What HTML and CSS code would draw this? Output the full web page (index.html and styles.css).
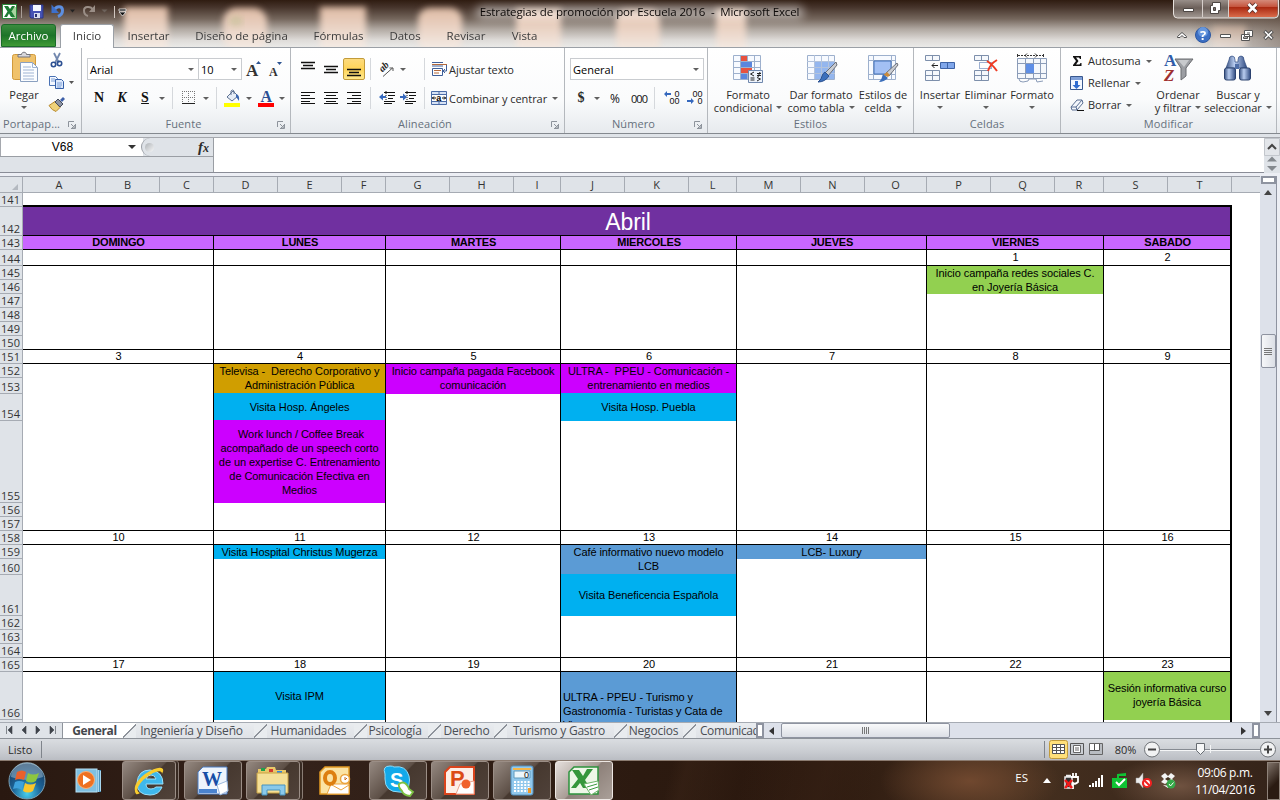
FILE: index.html
```html
<!DOCTYPE html>
<html lang="es">
<head>
<meta charset="utf-8">
<title>Estrategias de promoción por Escuela 2016 - Microsoft Excel</title>
<link rel="stylesheet" href="styles.css">
</head>
<body>
<div class="screen">
<header class="titlebar">
  <svg class="glass" width="1280" height="47" viewBox="0 0 1280 47">
    <defs><filter id="soft" x="-10%" y="-50%" width="120%" height="200%"><feGaussianBlur stdDeviation="3"/></filter><filter id="glow" x="-10%" y="-100%" width="120%" height="300%"><feGaussianBlur stdDeviation="5"/></filter>
    <linearGradient id="pe" x1="0" y1="0" x2="0" y2="1"><stop offset="0" stop-color="#dfbba4"/><stop offset="1" stop-color="#f6efea"/></linearGradient></defs>
    <g filter="url(#soft)" fill="url(#pe)"><rect x="124" y="7" width="44" height="44"/><rect x="223" y="8" width="44" height="44" rx="14"/><rect x="320" y="7" width="46" height="44"/><rect x="418" y="8" width="44" height="44" rx="12"/><rect x="516" y="9" width="45" height="44"/><rect x="616" y="10" width="44" height="44" rx="10"/><rect x="716" y="9" width="30" height="44"/><rect x="1212" y="26" width="34" height="26" opacity=".6"/></g>
    <ellipse cx="236" cy="21" rx="7" ry="5" fill="#b9bd8d" opacity=".5" filter="url(#soft)"/>
    <rect x="476" y="6" width="328" height="13" rx="6" fill="#fff" opacity=".5" filter="url(#glow)"/>
  </svg>
  <div class="title-row">
    <div class="quick">
      <svg width="126" height="24" viewBox="0 0 126 24">
        <rect x="2.500" y="4.500" width="14" height="14" fill="#fff" stroke="#2d8a3c"/><path d="M12 7h4v11h-4z" fill="#a9d49f"/><path d="M4 6h4l2 3 2-3h3l-3.500 5.500L15 17h-4l-2-3.500L7 17H4l3.500-5.500z" fill="#1f7d35"/>
        <path d="M21.500 6v12" stroke="#a89d96"/>
        <path d="M30 5h13v13H31l-1-1z" fill="#4552b4" stroke="#2c3688"/><path d="M33 5h8v6h-8z" fill="#f4f6ff"/><path d="M34 13h6v5h-6z" fill="#d5dbef"/><path d="M35 14h2v3h-2z" fill="#28306f"/>
        <path d="M54 10.500c2-5 8.500-5 8.500 0 0 3-2 5-4.500 6" fill="none" stroke="#5d8fe0" stroke-width="3"/><path d="M51.500 4.500v8.500h7.500z" fill="#3d70cc"/>
        <path d="M70 9.500h5l-2.500 3z" fill="#222"/><path d="M101.500 9.500h6l-3 3z" fill="#6d625b"/>
        <path d="M93 10c-2-4-9-4-9 .5 0 3 2 5 4 5.500" fill="none" stroke="#9a8e86" stroke-width="2"/><path d="M95 5v7h-6z" fill="#9a8e86"/>
        <path d="M114.500 6v12" stroke="#d0c6bf"/><path d="M119 9h7v2h-7zM119 12h7l-3.500 4z" fill="#111" stroke="#fff" stroke-width=".7"/>
      </svg>
    </div>
    <div class="title">Estrategias de promoción por Escuela 2016&nbsp; -&nbsp; Microsoft Excel</div>
    <svg class="winbtns" width="106" height="20" viewBox="0 0 106 20">
      <defs><linearGradient id="wr" x1="0" y1="0" x2="0" y2="1"><stop offset="0" stop-color="#d99a8b"/><stop offset=".48" stop-color="#c4523b"/><stop offset=".5" stop-color="#ab2a12"/><stop offset="1" stop-color="#d96b4a"/></linearGradient>
      <linearGradient id="wg" x1="0" y1="0" x2="0" y2="1"><stop offset="0" stop-color="#a39a95"/><stop offset=".5" stop-color="#6c605a"/><stop offset="1" stop-color="#a49b95"/></linearGradient></defs>
      <path d="M.5-2v16q0 4 4 4h97q4 0 4-4V-2z" fill="url(#wg)" stroke="#e7e1dd"/>
      <path d="M56-2v19h45q3.500 0 3.500-3.500V-2z" fill="url(#wr)"/>
      <path d="M29.500 0v17M55.500 0v17" stroke="#d6cfcb"/>
      <path d="M10.500 8.500h10v3h-10z" fill="#fff" stroke="#4d4643"/>
      <path d="M39.500 2.500h8v8h-2v3h-8v-8h2z" fill="#fff" stroke="#4d4643"/><path d="M40.500 7.500h2v3h-2z" fill="#77706c" stroke="#4d4643"/>
      <path d="M75.500 4l8 8M83.500 4l-8 8" stroke="#5b2e27" stroke-width="4.500"/><path d="M75.500 4l8 8M83.500 4l-8 8" stroke="#fff" stroke-width="2.700"/>
    </svg>
  </div>
  <nav class="tabs">
    <div class="tab file">Archivo</div>
    <div class="tab on">Inicio</div>
    <div class="tab w67">Insertar</div>
    <div class="tab w119">Diseño de página</div>
    <div class="tab w75">Fórmulas</div>
    <div class="tab w58">Datos</div>
    <div class="tab w64">Revisar</div>
    <div class="tab w53">Vista</div>
    <svg class="docbtns" width="104" height="22" viewBox="0 0 104 22">
      <path d="M3.500 12.500l4.500-4 4.500 4v1h-2.500l-2-2-2 2h-2.500z" fill="#fff" stroke="#4c4c4c"/>
      <circle cx="29" cy="11" r="7.500" fill="#3b6fc4" stroke="#2a559f"/><circle cx="29" cy="8" r="5" fill="#6596dd"/><text x="29" y="15.500" class="help">?</text>
      <path d="M46.500 10.500h10v3h-10z" fill="#fff" stroke="#555"/>
      <path d="M70.500 6.500h8v6h-8zM67.500 10.500h8v6h-8z" fill="#fff" stroke="#555"/><path d="M69.500 13h4v1.500h-4zM73 9h3" stroke="#555" fill="none"/>
      <path d="M90.500 7l8 8M98.500 7l-8 8" stroke="#555" stroke-width="3.600"/><path d="M91 7.500l7 7M98 7.500l-7 7" stroke="#fff" stroke-width="1.500"/>
    </svg>
  </nav>
</header>

<section class="ribbon">
  <div class="group g-clip">
    <div class="body">
      <div class="big w48">
        <svg width="30" height="32" viewBox="0 0 30 32"><rect x="3.500" y="3.500" width="23" height="25" rx="2" fill="#f0c26b" stroke="#d19a3c"/><path d="M9 6V3.500h3.500C12.500.500 17.500.500 17.500 3.500H21V6z" fill="#d8d8dc" stroke="#74747c"/><path d="M11.500 11.500h12l5 5v14h-17z" fill="#fbfdff" stroke="#8aa0c0"/><path d="M23.500 11.500v5h5M14 16h8M14 19h11M14 22h11M14 25h11M14 28h11" stroke="#9fb4d3" fill="none"/></svg>
        <span>Pegar</span><i class="dd"></i>
      </div>
      <div class="clipcol">
        <svg width="28" height="18" viewBox="0 0 28 18"><path d="M6 1l5 10M12 1L7 11" stroke="#7288ae" stroke-width="1.800"/><circle cx="5.500" cy="12.500" r="2.200" fill="none" stroke="#2b4f92" stroke-width="1.600"/><circle cx="11.500" cy="11.500" r="2.200" fill="none" stroke="#2b4f92" stroke-width="1.600"/></svg>
        <svg width="28" height="18" viewBox="0 0 28 18"><path d="M1.500 2.500h6l2 2v7h-8z" fill="#f4f8ff" stroke="#4a72b4"/><path d="M7.500 5.500h6l2 2v7h-8z" fill="#dce8fb" stroke="#345fa8"/><path d="M3 5h4M3 7h4M9 9h5M9 11h5M9 13h4" stroke="#7c9fd6"/><path d="M21 7h5l-2.500 3z" fill="#555"/></svg>
        <svg width="28" height="18" viewBox="0 0 28 18"><path d="M1 9.500l6-4 5 6-4 4q-4-1-7-6z" fill="#eed27a" stroke="#b98b2f"/><path d="M7 6l3-3 5 5-3 3z" fill="#8b93a3" stroke="#454c5c"/><path d="M12 4l3-3 2 2-3 3z" fill="#3d5fa8"/></svg>
      </div>
    </div>
    <div class="label"><span>Portapap...</span><svg class="launch" width="8" height="8" viewBox="0 0 8 8"><path d="M.5 6V.5H6M3 3l3 3M7.500 3v4.500H3M7 4v3H4z" fill="none" stroke="#8d939b"/></svg></div>
  </div>
  <div class="group g-font">
    <div class="body col">
      <div class="row r-font1">
        <div class="combo"><span>Arial</span><i class="dd"></i></div><div class="combo size"><span>10</span><i class="dd"></i></div>
        <svg width="20" height="18" viewBox="0 0 20 18"><text x="3" y="16" class="ser s18">A</text><path d="M13 4l2.500-3 2.500 3z" fill="#2c5391"/></svg>
        <svg width="20" height="18" viewBox="0 0 20 18"><text x="5" y="16" class="ser s12">A</text><path d="M13 2h5l-2.500 3z" fill="#2c5391"/></svg>
      </div>
      <div class="row r-font2">
        <b class="ser2">N</b><b class="ser2 it">K</b><b class="ser2 un">S</b><i class="dd"></i><i class="sep"></i>
        <svg width="14" height="14" viewBox="0 0 14 14"><path d="M0 .5h13M0 6.500h13M.5 0v13M6.500 0v13M12.500 0v13" stroke="#777" stroke-dasharray="1 1"/><path d="M0 12.500h13" stroke="#222"/></svg>
        <i class="dd"></i><i class="sep"></i>
        <svg width="17" height="18" viewBox="0 0 17 18"><path d="M3 8l6-6 5 5-6 5z" fill="#e6edf7" stroke="#5d7192"/><path d="M7 6V2q1.500-2 3 0v3" fill="none" stroke="#5d7192"/><path d="M12 5q4 1 3 7-2-3-3-4z" fill="#3b66b0"/><path d="M0 14h16v4H0z" fill="#ff0"/></svg>
        <i class="dd"></i>
        <svg width="16" height="18" viewBox="0 0 16 18"><text x="2.500" y="13" class="ser s17 blue">A</text><path d="M0 14h16v4H0z" fill="#f00"/></svg>
        <i class="dd"></i>
      </div>
    </div>
    <div class="label"><span>Fuente</span><svg class="launch" width="8" height="8" viewBox="0 0 8 8"><path d="M.5 6V.5H6M3 3l3 3M7.500 3v4.500H3M7 4v3H4z" fill="none" stroke="#8d939b"/></svg></div>
  </div>
  <div class="group g-align">
    <div class="body col">
      <div class="row r-al">
        <svg width="14" height="14" viewBox="0 0 14 14"><path d="M0 .5h14M2 3.500h10M0 6.500h14" stroke="#111" stroke-width="1.300"/></svg>
        <svg width="14" height="14" viewBox="0 0 14 14"><path d="M0 4.500h14M2 7.500h10M0 10.500h14" stroke="#111" stroke-width="1.300"/></svg>
        <div class="hot"><svg width="14" height="14" viewBox="0 0 14 14"><path d="M0 7.500h14M2 10.500h10M0 13.500h14" stroke="#111" stroke-width="1.300"/></svg></div>
        <i class="sep"></i>
        <svg width="16" height="16" viewBox="0 0 16 16"><text transform="translate(3.500 11.500) rotate(-45)" class="orient">ab</text><path d="M4 15.500L13.500 7M10.500 7h3.500v3" stroke="#555" fill="none"/></svg>
        <i class="dd start"></i><i class="sep"></i>
        <svg width="17" height="16" viewBox="0 0 17 16"><path d="M1 1.500h11M1 5h11" stroke="#3f5f99"/><path d="M1 3.500h15" stroke="#b56a3c"/><path d="M1.500 7.500h10v7h-10z" fill="#fff" stroke="#3f5f99"/><path d="M3 9.500h7M3 12h5" stroke="#b56a3c"/><path d="M15.500 4v6h-3M14 8l-2 2 2 2" stroke="#3f5f99" fill="none"/></svg>
        <span>Ajustar texto</span>
      </div>
      <div class="row r-al">
        <svg width="14" height="14" viewBox="0 0 14 14"><path d="M0 1.500h14M0 4.500h9M0 7.500h14M0 10.500h9M0 12.500h14" stroke="#111"/></svg>
        <svg width="14" height="14" viewBox="0 0 14 14"><path d="M0 1.500h14M2 4.500h10M0 7.500h14M2 10.500h10M0 12.500h14" stroke="#111"/></svg>
        <svg width="14" height="14" viewBox="0 0 14 14"><path d="M0 1.500h14M5 4.500h9M0 7.500h14M5 10.500h9M0 12.500h14" stroke="#111"/></svg>
        <i class="sep"></i>
        <svg width="16" height="14" viewBox="0 0 16 14"><path d="M5 1.500h11M9 4.500h7M9 7.500h5M5 10.500h11M5 12.500h8" stroke="#111"/><path d="M7 0v14" stroke="#111" stroke-dasharray="1 1"/><path d="M0 6l4-3.500v2.500h3v2H4v2.500z" fill="#3568bd"/></svg>
        <svg width="16" height="14" viewBox="0 0 16 14"><path d="M5 1.500h11M9 4.500h7M9 7.500h5M5 10.500h11M5 12.500h8" stroke="#111"/><path d="M7 0v14" stroke="#111" stroke-dasharray="1 1"/><path d="M7 6L3 2.500v2.500H0v2h3v2.500z" fill="#3568bd"/></svg>
        <i class="sep"></i>
        <svg width="17" height="16" viewBox="0 0 17 16"><path d="M.5 1.500h15v13H.5z" fill="#d7e3f5" stroke="#4a6ba6"/><path d="M1 4.500h15M1 11.500h15M8 1v3M8 12v3" stroke="#4a6ba6"/><path d="M1 5h14v6H1z" fill="#fff"/><path d="M1 8h4M15 8h-4M3 6.500L1.500 8 3 9.500M13 6.500L14.500 8 13 9.500" stroke="#111" fill="none"/><text x="5.200" y="10.500" class="mini">a</text></svg>
        <span>Combinar y centrar</span><i class="dd ml"></i>
      </div>
    </div>
    <div class="label"><span>Alineación</span><svg class="launch" width="8" height="8" viewBox="0 0 8 8"><path d="M.5 6V.5H6M3 3l3 3M7.500 3v4.500H3M7 4v3H4z" fill="none" stroke="#8d939b"/></svg></div>
  </div>
  <div class="group g-num">
    <div class="body col">
      <div class="row r-num1"><div class="combo"><span>General</span><i class="dd"></i></div></div>
      <div class="row r-num2">
        <b class="cur">$</b><i class="dd"></i><b class="pct">%</b><b class="pct zero">000</b><i class="sep"></i>
        <svg width="16" height="14" viewBox="0 0 16 14"><path d="M0 3l3-3v2h4v2H3v2z" fill="#3568bd"/><text x="10.500" y="6" class="tiny">0</text><text x="5.500" y="13" class="tiny">00</text></svg>
        <svg width="16" height="14" viewBox="0 0 16 14"><text x="5.500" y="6" class="tiny">00</text><text x="10.500" y="13" class="tiny">0</text><path d="M7 10l-3-3v2H0v2h4v2z" fill="#3568bd"/></svg>
      </div>
    </div>
    <div class="label"><span>Número</span><svg class="launch" width="8" height="8" viewBox="0 0 8 8"><path d="M.5 6V.5H6M3 3l3 3M7.500 3v4.500H3M7 4v3H4z" fill="none" stroke="#8d939b"/></svg></div>
  </div>
  <div class="group g-sty">
    <div class="body">
      <div class="big w78">
        <svg width="30" height="32" viewBox="0 0 30 32"><path d="M.5 4.500h27v24H.5z" fill="#f7faff" stroke="#9db0cd"/><path d="M0 10.500h28M0 16.500h28M0 22.500h28M7.500 4v24M14.500 4v24M21.500 4v24" stroke="#9db0cd"/><path d="M8 5h6v5H8zM8 17h11v5H8z" fill="#e8523e"/><path d="M8 11h11v5H8zM8 23h6v5H8z" fill="#5b86dd"/><path d="M15.500 19.500h14v12h-14z" fill="#eff4fc" stroke="#7088ad"/><path d="M21 21l-3.500 2 3.500 2M17.500 27h4M17.500 29h4M24 22.500h4M24 24.500h4M27 21l-2 5M24 26.500l3.500 1.500-3.500 2" stroke="#222" fill="none"/></svg>
        <span>Formato</span><span>condicional<i class="dd in"></i></span>
      </div>
      <div class="big w68">
        <svg width="32" height="32" viewBox="0 0 32 32"><path d="M2.500 4.500h27v24h-27z" fill="#f7faff" stroke="#9db0cd"/><path d="M9 11h20v17H9z" fill="#94b6ee"/><path d="M2 10.500h28M2 16.500h28M2 22.500h28M9.500 4v24M16.500 4v24M23.500 4v24" stroke="#b3c3dc"/><path d="M31 11L20 22l3 3L32 14z" fill="#c9ccd2" stroke="#6d7179"/><path d="M20 21l4 4q-4 6-11 6 4-3 4-6 1-3 3-4z" fill="#3c6fbb" stroke="#2a5190"/></svg>
        <span>Dar formato</span><span>como tabla<i class="dd in"></i></span>
      </div>
      <div class="big w56">
        <svg width="32" height="32" viewBox="0 0 32 32"><path d="M1.500 4.500h27v24h-27z" fill="#f7faff" stroke="#9db0cd"/><path d="M1 9.500h28M1 23.500h28M6.500 4v24M24.500 4v24" stroke="#9db0cd"/><path d="M7 10h17v13H7z" fill="#a3c0f4" stroke="#4472b8"/><path d="M30 12L19 22l3 3 9-11z" fill="#c9ccd2" stroke="#6d7179"/><path d="M16 24l4-3 3 3-2 2z" fill="#c98a3c"/><path d="M16 23l5 4q-4 4-9 4 3-3 4-8z" fill="#3c6fbb"/></svg>
        <span>Estilos de</span><span>celda<i class="dd in"></i></span>
      </div>
    </div>
    <div class="label"><span>Estilos</span></div>
  </div>
  <div class="group g-cel">
    <div class="body">
      <div class="big w46">
        <svg width="30" height="32" viewBox="0 0 30 32"><path d="M.5 4.500h14v5H.5zM.5 19.500h14v10H.5zM7.500 4.500v5M7.500 19.500v10M.5 24.500h14" fill="#f5f8fc" stroke="#7d8fab"/><path d="M15.500 11.500h14v6h-14zM22.500 11.500v6" fill="#7fa6ea" stroke="#3d62a5"/><path d="M13 14.500H7M9.500 12L7 14.500 9.500 17" stroke="#222" fill="none"/></svg>
        <span>Insertar</span><i class="dd"></i>
      </div>
      <div class="big w45">
        <svg width="30" height="32" viewBox="0 0 30 32"><path d="M3.500 4.500h14v5h-14zM3.500 19.500h14v10h-14zM10.500 4.500v5M10.500 19.500v10M3.500 24.500h14" fill="#f5f8fc" stroke="#7d8fab"/><path d="M8.500 11.500h12v6h-12z" fill="none" stroke="#3d62a5" stroke-dasharray="1 1"/><path d="M16 10q5 3 10 10M26 9q-7 4-9 11" stroke="#ee3b24" stroke-width="2" fill="none"/></svg>
        <span>Eliminar</span><i class="dd"></i>
      </div>
      <div class="big w48">
        <svg width="32" height="32" viewBox="0 0 32 32"><path d="M1.500 7.500h29v20h-29zM1.500 12.500h29M1.500 22.500h29M9.500 7.500v20M17.500 7.500v20M24.500 7.500v20" fill="#f5f8fc" stroke="#8b9cb8"/><path d="M10 13h8v9h-8z" fill="#5f8fe6"/><path d="M2 4.500h25" stroke="#333" stroke-dasharray="2 1"/><path d="M1.500 3v3M27.500 3v3M11 2.500L9 4.500l2 2M19 2.500l2 2-2 2" stroke="#333" fill="none"/><path d="M3 28q0 3 4 3l5-1 1-2 7 0 1 3 6-1" stroke="#8b9cb8" fill="none"/></svg>
        <span>Formato</span><i class="dd"></i>
      </div>
    </div>
    <div class="label"><span>Celdas</span></div>
  </div>
  <div class="group g-mod">
    <div class="body">
      <div class="smalls">
        <div><svg width="14" height="14" viewBox="0 0 14 14"><path d="M3 2h8v3h-1l-1-1.500H6L8.500 7 6 10.500h3.500L10.500 9h1v3H3v-1l3-4-3-4z" fill="#111"/></svg><span>Autosuma</span><i class="dd"></i></div>
        <div><svg width="14" height="16" viewBox="0 0 14 16"><path d="M.5 1.500h12v13H.5z" fill="#f4f8ff" stroke="#38588f"/><path d="M1 2h11v3H1z" fill="#7fa0d8"/><path d="M5 6h3v4h2.500l-4 4-4-4H5z" fill="#2f6cd0"/></svg><span>Rellenar</span><i class="dd"></i></div>
        <div><svg width="14" height="14" viewBox="0 0 14 14"><path d="M1 9l6-7h5l1 3-6 7H2z" fill="#f4f7fc" stroke="#5a6f93"/><path d="M1 9h5l6-7M6 9l1 3" stroke="#5a6f93" fill="none"/><path d="M7 12.500h7" stroke="#111"/></svg><span>Borrar</span><i class="dd"></i></div>
      </div>
      <div class="big w54">
        <svg width="30" height="32" viewBox="0 0 30 32"><text x="1" y="15" class="az">A</text><text x="1" y="30" class="az red">Z</text><path d="M12 8h18l-7 9v8l-5 4V17z" fill="#9c9ea3" stroke="#6a6c70"/><path d="M15 9h11l-5 7z" fill="#c8cacd"/></svg>
        <span>Ordenar</span><span>y filtrar<i class="dd in"></i></span>
      </div>
      <div class="big w66">
        <svg width="30" height="32" viewBox="0 0 30 32"><defs><linearGradient id="bn"><stop offset="0" stop-color="#3c5584"/><stop offset=".4" stop-color="#b9cdf0"/><stop offset="1" stop-color="#2f4a80"/></linearGradient></defs><path d="M6 9q0-4 3-4t3 4v2h3V9q0-4 3-4t3 4l3 8H3z" fill="url(#bn)" stroke="#2f4a80" stroke-width=".7"/><rect x="1.500" y="17" width="11" height="12" rx="2" fill="url(#bn)" stroke="#2b426f"/><rect x="16.500" y="17" width="11" height="12" rx="2" fill="url(#bn)" stroke="#2b426f"/><path d="M12 13h4v5h-4z" fill="#506fa8"/></svg>
        <span>Buscar y</span><span>seleccionar<i class="dd in"></i></span>
      </div>
    </div>
    <div class="label"><span>Modificar</span></div>
  </div>
</section>

<section class="formula">
  <div class="namebox"><div class="nm"><span>V68</span><i class="dd dark"></i></div><div class="fxbar"><i class="knob"></i><em>f<small>x</small></em></div></div>
  <div class="finput"></div>
  <svg class="fbtn" width="16" height="35" viewBox="0 0 16 35"><path d="M0 0h16v35H0z" fill="#dfe3e8"/><path d="M.5.500h15v17H.5z" fill="#e3e6ea" stroke="#c2c6cc"/><path d="M4 11l4-4 4 4" stroke="#444" stroke-width="2" fill="none"/><path d="M3 23.500h10l-5-5zM3 28h10l-5 5z" fill="#84898e"/></svg>
</section>

<main class="sheet">
  <div class="grid-area">
    <div class="cols"><span class="corner"><i></i></span><span>A</span><span>B</span><span>C</span><span>D</span><span>E</span><span>F</span><span>G</span><span>H</span><span>I</span><span>J</span><span>K</span><span>L</span><span>M</span><span>N</span><span>O</span><span>P</span><span>Q</span><span>R</span><span>S</span><span>T</span><span></span></div>
    <div class="cells">
      <div class="nums"><span>141</span><span>142</span><span>143</span><span>144</span><span>145</span><span>146</span><span>147</span><span>148</span><span>149</span><span>150</span><span>151</span><span>152</span><span>153</span><span>154</span><span>155</span><span>156</span><span>157</span><span>158</span><span>159</span><span>160</span><span>161</span><span>162</span><span>163</span><span>164</span><span>165</span><span>166</span><span></span></div>
      <div class="cal">
        <div class="month">Abril</div>
        <div class="dow">DOMINGO</div><div class="dow">LUNES</div><div class="dow">MARTES</div><div class="dow">MIERCOLES</div><div class="dow">JUEVES</div><div class="dow">VIERNES</div><div class="dow">SABADO</div>
        <div class="d w1"></div><div class="d w1"></div><div class="d w1"></div><div class="d w1"></div><div class="d w1"></div><div class="d w1">1</div><div class="d w1">2</div>
        <div class="b b1 c1"></div><div class="b b1 c2"></div><div class="b b1 c3"></div><div class="b b1 c4"></div><div class="b b1 c5"></div><div class="b b1 c6"></div><div class="b b1 c7"></div>
        <div class="d w2">3</div><div class="d w2">4</div><div class="d w2">5</div><div class="d w2">6</div><div class="d w2">7</div><div class="d w2">8</div><div class="d w2">9</div>
        <div class="b b2 c1"></div><div class="b b2 c2"></div><div class="b b2 c3"></div><div class="b b2 c4"></div><div class="b b2 c5"></div><div class="b b2 c6"></div><div class="b b2 c7"></div>
        <div class="d w3">10</div><div class="d w3">11</div><div class="d w3">12</div><div class="d w3">13</div><div class="d w3">14</div><div class="d w3">15</div><div class="d w3">16</div>
        <div class="b b3 c1"></div><div class="b b3 c2"></div><div class="b b3 c3"></div><div class="b b3 c4"></div><div class="b b3 c5"></div><div class="b b3 c6"></div><div class="b b3 c7"></div>
        <div class="d w4">17</div><div class="d w4">18</div><div class="d w4">19</div><div class="d w4">20</div><div class="d w4">21</div><div class="d w4">22</div><div class="d w4">23</div>
        <div class="b b4 c1"></div><div class="b b4 c2"></div><div class="b b4 c3"></div><div class="b b4 c4"></div><div class="b b4 c5"></div><div class="b b4 c6"></div><div class="b b4 c7"></div>
        <div class="ev green c6 r145-146">Inicio campaña redes sociales C.<br>en Joyería Básica</div>
        <div class="ev gold c2 r152-153">Televisa -&nbsp; Derecho Corporativo y<br>Administración Pública</div>
        <div class="ev cyan up c2 r154">Visita Hosp. Ángeles</div>
        <div class="ev magenta up c2 r155">&nbsp;Work lunch / Coffee Break<br>acompañado de un speech corto<br>de un expertise C. Entrenamiento<br>de Comunicación Efectiva en<br>Medios</div>
        <div class="ev magenta c3 r152-153">Inicio campaña pagada Facebook<br>comunicación</div>
        <div class="ev magenta c4 r152-153">ULTRA -&nbsp; PPEU - Comunicación -<br>entrenamiento en medios</div>
        <div class="ev cyan up c4 r154">Visita Hosp. Puebla</div>
        <div class="ev cyan c2 r159">Visita Hospital Christus Mugerza</div>
        <div class="ev blue c4 r159-160">Café informativo nuevo modelo<br>LCB</div>
        <div class="ev cyan up c4 r161">Visita Beneficencia Española</div>
        <div class="ev blue c5 r159">LCB- Luxury</div>
        <div class="ev cyan c2 r166">Visita IPM</div>
        <div class="ev blue left c4 r166-167">ULTRA - PPEU - Turismo y<br>Gastronomía - Turistas y Cata de<br>Vinos</div>
        <div class="ev green last c7 r166">Sesión informativa curso<br>joyería Básica</div>
      </div>
      <div class="blank"></div>
    </div>
  </div>
  <div class="vscroll"><i class="split"></i><i class="up-arrow"></i><div class="vthumb"><i></i></div><i class="down-arrow"></i></div>
</main>

<section class="sheettabs">
  <svg class="navs" width="63" height="16" viewBox="0 0 63 16"><path d="M6.500 3v8M12 3v8L8 7zM26 3v8l-4-4zM36 3v8l4-4zM50 3v8l4-4zM55.500 3v8" fill="#3f444b" stroke="#3f444b" stroke-width=".6"/><path d="M62.500 0v16" stroke="#8e939b"/></svg>
  <div class="st act">General</div><i class="slash"></i>
  <div class="st t2">Ingeniería y Diseño</div><i class="slash"></i>
  <div class="st t3">Humanidades</div><i class="slash"></i>
  <div class="st t4">Psicología</div><i class="slash"></i>
  <div class="st t5">Derecho</div><i class="slash"></i>
  <div class="st t6">Turismo y Gastro</div><i class="slash"></i>
  <div class="st t7">Negocios</div><i class="slash"></i>
  <div class="st t8">Comunicad</div>
  <div class="hscroll"><i class="hsplit"></i><i class="larr"></i><div class="hthumb"><i></i></div><i class="rarr"></i><i class="hsplit"></i></div>
</section>

<footer class="status">
  <span class="listo">Listo</span><i class="ssep"></i><i class="grow"></i><i class="ssep s2"></i>
  <svg width="58" height="20" viewBox="0 0 58 20"><rect x=".5" y=".5" width="18" height="18" rx="2" fill="#ffe07a" stroke="#c29b3a"/><path d="M3.500 4.500h12v9h-12zM3.500 7.500h12M3.500 10.500h12M7.500 4.500v9M11.500 4.500v9" fill="#fff" stroke="#555"/><path d="M21.500 3.500h13v11h-13z" fill="#ccd0d5" stroke="#555"/><path d="M24.500 5.500h7v7h-7zM26 8h4M26 10h4" fill="#fff" stroke="#666"/><path d="M40.500 3.500h13v11h-13z" fill="#b9bdc2" stroke="#666"/><path d="M41 4h4v6h-4zM46 4h4v6h-4z" fill="#fff"/><path d="M45.500 4v6M50.500 4v6.500H41" fill="none" stroke="#555"/></svg>
  <span class="zoom">80%</span>
  <svg class="slider" width="136" height="20" viewBox="0 0 136 20"><path d="M15 9.500h103" stroke="#868b92"/><path d="M15 10.500h103M66.500 5v8" stroke="#f4f5f6"/><circle cx="8" cy="9.500" r="7.500" fill="#f1f2f3" stroke="#6e7277"/><path d="M4 9.500h8" stroke="#444" stroke-width="2"/><circle cx="124" cy="9.500" r="7.500" fill="#f1f2f3" stroke="#6e7277"/><path d="M120 9.500h8M124 5.500v8" stroke="#444" stroke-width="2"/><path d="M52.500 3.500h8v7l-4 4-4-4z" fill="#f6f7f8" stroke="#666b71"/></svg>
</footer>

<footer class="taskbar">
  <svg class="orb" width="40" height="38" viewBox="0 0 40 38"><defs><radialGradient id="ob" cx=".5" cy=".85" r=".8"><stop offset="0" stop-color="#49d0ee"/><stop offset=".5" stop-color="#1c6397"/><stop offset="1" stop-color="#16395f"/></radialGradient></defs><circle cx="20" cy="19" r="18" fill="url(#ob)" stroke="#7ba0b4"/><path d="M4 15a16 15 0 0 1 32 0q-16 6-32 0" fill="#b5d0df" opacity=".45"/><path d="M10 10q5-3 9 0l-2 8q-4-2-9 0z" fill="#e9602b"/><path d="M21 11q5 3 11 0l-3 8q-5 3-10 0z" fill="#8dc63f"/><path d="M8 20q4-2 9 0l-2 8q-4-3-9-1z" fill="#3ea2dd"/><path d="M18 21q5 3 11 0l-3 8q-5 3-10 0z" fill="#fbc62c"/></svg>
  <svg class="wmp" width="28" height="28" viewBox="0 0 28 28"><path d="M4 3h22v22H4z" fill="#4a93bd"/><path d="M23 3h1v22h-1zM25 4h1v20h-1z" fill="#a7d6ee"/><rect x="1" y="2" width="21" height="23" fill="#7fc0e2" stroke="#b7e0f3"/><circle cx="11" cy="13" r="8.500" fill="#ee7021" stroke="#f9b27a"/><path d="M8 8l8 5-8 5z" fill="#fff"/></svg>
  <div class="task stack ie"><svg width="32" height="32" viewBox="0 0 32 32"><path fill-rule="evenodd" d="M30 19H13q0 5 5 5 3 0 5-2h6q-3 8-12 8Q4 30 4 18 5 5 17 5q13 1 13 14zM13 14h10q-1-4-5-4t-5 4z" fill="#3fb8ec" stroke="#9be0fa"/><path d="M3 29Q-2 20 12 9 26 0 30 4q1 2-1 5 0-5-9-1Q9 14 5 22q-2 4 2 6-3 2-4 1z" fill="#f8cc2e"/></svg></div>
  <div class="task wd"><svg width="32" height="32" viewBox="0 0 32 32"><path d="M6 2h24v27H1V7z" fill="#eef4fc" stroke="#4b7dc4"/><text x="5" y="21" class="off wblue">W</text><path d="M2 24h18v4H2z" fill="#4a83ce"/><path d="M20 20l10-4 1 10-8 4z" fill="#fff" stroke="#9db9de"/></svg></div>
  <div class="task stack fo"><svg width="34" height="32" viewBox="0 0 34 32"><path d="M2 4h8l1-2h8l1 3h10v22H2z" fill="#e8c869"/><path d="M5 3h4v3H5z" fill="#21a04a"/><path d="M13 4h4v3h-4z" fill="#d63c2e"/><path d="M21 6h5v3h-5z" fill="#3288dc"/><path d="M1 8h31v20H1z" fill="#f4df97" stroke="#c8a345"/><path d="M6 30V20h23v10h-5v-5H11v5z" fill="#8ac9ea" stroke="#4793be"/></svg></div>
  <svg class="outl" width="32" height="32" viewBox="0 0 32 32"><path d="M6 2h24v27H1V7z" fill="#fbe3a4" stroke="#e39a22" stroke-width="1.500"/><path d="M12 19h18v10H8z" fill="#fff" stroke="#eba43e"/><path d="M13 20l9 5 8-5" stroke="#eba43e" fill="none"/><ellipse cx="11" cy="13" rx="5" ry="6" fill="#fbe3a4" stroke="#dd7f10" stroke-width="4"/><circle cx="26" cy="14" r="4.500" fill="#fff" stroke="#eba43e" stroke-width="1.500"/><path d="M26 12v3l2-2" stroke="#c96c1c" fill="none"/></svg>
  <div class="task sk"><svg width="32" height="32" viewBox="0 0 32 32"><path d="M3 9Q0 1 8 1q3 0 4 1 12-2 15 9 1 4 0 8 0 10-10 8Q3 27 3 14q0-2 0-5z" fill="#12a9ea" stroke="#8edcf9"/><text x="8" y="22" class="off white">S</text><path d="M17 19q4-3 7 0t3 5l4 3-3 4q-7-1-8-5-4-4-3-7z" fill="#fff" stroke="#7cc142" stroke-width="1.800"/></svg></div>
  <div class="task pp"><svg width="32" height="32" viewBox="0 0 32 32"><path d="M6 2h24v27H1V7z" fill="#fdeee6" stroke="#d9431c" stroke-width="2"/><text x="6" y="21" class="off orange">P</text><path d="M16 19l14-3v13H12z" fill="#fff" stroke="#eaa58f"/><circle cx="22" cy="19" r="4.500" fill="#f0622c"/></svg></div>
  <div class="task ca"><svg width="26" height="32" viewBox="0 0 26 32"><rect x="2" y="1" width="22" height="29" rx="2" fill="#91c8ec" stroke="#5291bf"/><path d="M4 3h18v2H4z" fill="#f3b54a"/><path d="M5 6h16v7H5z" fill="#edf7fc" stroke="#619abd"/><text x="15" y="12.500" class="tiny">0</text><path d="M5 17h16M5 20h16M5 23h16M5 26h16" stroke="#fff" stroke-width="2" stroke-dasharray="2 1.400"/><path d="M19 23h3v5h-3z" fill="#f19a29"/></svg></div>
  <div class="task lit ex"><svg width="32" height="32" viewBox="0 0 32 32"><path d="M6 2h24v27H1V7z" fill="#edf7e7" stroke="#2c923c" stroke-width="1.500"/><path d="M4 5h7l4 6 4-7h6l-8 11 5 8h-7l-3-5-4 5H3l7-9z" fill="#36973c"/><path d="M16 19l14-3 1 9-8 5z" fill="#fff" stroke="#6db66a"/><path d="M19 22l10-3M21 25l9-3" stroke="#3a9a40"/></svg></div>
  <i class="grow"></i>
  <span class="lang">ES</span>
  <svg class="tray" width="144" height="24" viewBox="0 0 144 24"><path d="M2 14h8l-4-5z" fill="#fff"/><path d="M25 6.500h5M24 8h7v11h-7z" stroke="#eee" stroke-width="1.500" fill="#333"/><path d="M30 8h7v5q-3 3-5 1v6M32 4v4M35 4v4" stroke="#fff" stroke-width="1.800" fill="none"/><path d="M24 11l7 8M31 11l-7 8" stroke="#f01818" stroke-width="2.600"/><path d="M48 16h2v2h-2zM51 14h2v4h-2zM54 12h2v6h-2zM57 9h2v9h-2zM60 6h2v12h-2z" fill="#fff"/><path d="M71 9h15v10H71z" fill="#10c334"/><path d="M76 5l9-1v3h-7v4h-2z" fill="#10c334"/><path d="M75 13l3 3 6-6" stroke="#fff" stroke-width="2" fill="none"/><path d="M95 9h3l4-5v15l-4-5h-3z" fill="#eee" stroke="#999" stroke-width=".5"/><circle cx="106" cy="14" r="4" fill="#fff" stroke="#f02020" stroke-width="2.200"/><path d="M103 11l6 6" stroke="#f02020" stroke-width="2"/><path d="M120 7l4-3 3 3 3-3 4 3-3 3 3 3-4 2-3-2-3 2-4-2 3-3zM122 16l5 3 3-2" fill="#f4f4f4"/><path d="M124 10l3-2 3 2-3 2z" fill="#43301f"/><circle cx="130" cy="15" r="4.500" fill="#35a848"/><path d="M128 15l1.500 2 3-3.500" stroke="#fff" fill="none"/></svg>
  <div class="clock"><span>09:06 p.m.</span><span>11/04/2016</span></div>
  <i class="desk"></i>
</footer>
</div>
</body>
</html>
```
FILE: styles.css
```css
* { box-sizing: border-box; }
body { margin: 0; font: 11px/13px "Open Sans", "Noto Sans", sans-serif; color: #2b2b2b; }
svg { display: block; flex: none; overflow: visible; }
i { display: block; flex: none; font-style: normal; }
.screen { width: 1280px; height: 800px; overflow: hidden; display: flex; flex-direction: column; background: #dfe3e8; }
.screen > * { flex: none; }
.grow { flex: 1; }

/* title bar and tabs */
.titlebar {
  position: relative; height: 48px; border-bottom: 1px solid #9ba0a6;
  background:
    linear-gradient(90deg, #5f4d4100 1190px, #5f4d4188 1280px),
    linear-gradient(#2f1c11 0, #45332a 7px, #75675d 19px, #b0a8a1 29px, #dedbd8 40px, #ececea 48px);
}
.glass { position: absolute; left: 0; top: 0; overflow: hidden; }
.title-row, .tabs { position: relative; }
.title-row { display: flex; height: 24px; align-items: flex-start; }
.quick { width: 126px; }
.title { width: 1027px; text-align: center; line-height: 23px; font-size: 11.500px; letter-spacing: -.13px; color: #0c0908; }
.winbtns { margin-left: 20px; }
.tabs { display: flex; height: 24px; align-items: flex-start; }
.tab { height: 24px; text-align: center; line-height: 23px; font-size: 11.500px; color: #3c3c3c; }
.file { width: 55px; height: 23px; margin: 0 4px 0 1px; border-radius: 3px 3px 0 0; color: #fff; border: 1px solid #1a6b28; background: linear-gradient(#3b8c3f, #1d7428 50%, #3f9a35); line-height: 22px; }
.on { width: 54px; margin-right: 1px; background: #fff; border: 1px solid #9ba0a6; border-bottom: 0; border-radius: 3px 3px 0 0; line-height: 21px; }
.w67 { width: 67px; } .w119 { width: 119px; } .w75 { width: 75px; } .w58 { width: 58px; } .w64 { width: 64px; } .w53 { width: 53px; }
.docbtns { margin-left: auto; margin-right: 2px; }
.help { font: bold 13px "Open Sans", sans-serif; fill: #fff; text-anchor: middle; }

/* ribbon */
.ribbon { height: 86px; display: flex; background: linear-gradient(#fff, #fafbfc 60%, #e7eaee); border-bottom: 1px solid #84898f; letter-spacing: 0; }
.group { display: flex; flex-direction: column; border-right: 1px solid #b4b8bd; }
.g-clip { width: 82px; } .g-font { width: 209px; } .g-align { width: 274px; } .g-num { width: 143px; } .g-sty { width: 206px; } .g-cel { width: 147px; } .g-mod { width: 216px; }
.body { flex: 1; display: flex; }
.body.col { flex-direction: column; padding-top: 10px; gap: 7px; }
.label { height: 17px; padding-bottom: 2px; line-height: 15px; color: #66707c; text-align: center; display: flex; justify-content: center; align-items: center; letter-spacing: .1px; }
.label span { flex: 1; margin-right: -14px; }
.label .launch { margin: 2px 5px 0 6px; }
.label span:only-child { margin-right: 0; }
.g-clip .label span { text-align: left; padding-left: 3px; }
.row { height: 22px; display: grid; align-items: center; justify-items: center; }
.dd { width: 0; height: 0; border: solid transparent; border-width: 3px 3px 0; border-top-color: #5f5f5f; }
.dd.in { display: inline-block; margin: 0 0 3px 4px; }
.dd.ml { margin-left: 5px; }
.dd.start { margin-left: -11px; }
.dd.dark { border-width: 4px 4px 0; border-top-color: #333; margin-right: 7px; }
.sep { width: 1px; height: 22px; background: #d5d8dc; }
.combo { justify-self: stretch; height: 22px; border: 1px solid #c9ccd0; background: #fff; display: flex; align-items: center; justify-content: space-between; padding: 0 4px 0 2px; color: #000; }
.size { border-left: 0; }
.r-font1 { grid-template-columns: 112px 43px 21px 22px; padding-left: 5px; justify-content: start; }
.r-font2 { grid-template-columns: 22px 24px 22px 11px 10px 24px 10px 10px 23px 9px 25px 8px; padding-left: 6px; justify-content: start; }
.r-al { grid-template-columns: 22px 24px 22px 10px 23px 20px 12px 18px auto auto; padding-left: 6px; justify-content: start; }
.r-al span { margin-left: 1px; letter-spacing: -.05px; }
.r-num1 { grid-template-columns: 134px; padding-left: 5px; justify-content: start; }
.r-num2 { grid-template-columns: 20px 12px 24px 24px 7px 28px 18px; padding-left: 6px; justify-content: start; }
.hot { width: 22px; height: 22px; display: grid; place-items: center; border: 1px solid #c29b3a; border-radius: 2px; background: linear-gradient(#fddb7e, #ffd458 50%, #ffe88c); }
.ser { font-family: "Liberation Serif", serif; font-weight: bold; fill: #333; letter-spacing: 0; }
.s18 { font-size: 17px; } .s12 { font-size: 12px; } .s17 { font-size: 16px; } .blue.ser { fill: #2c4f93; }
.ser2 { font: bold 14px/16px "Liberation Serif", serif; color: #111; letter-spacing: 0; }
.it { font-style: italic; } .un { text-decoration: underline; }
.orient { font: italic bold 10px "Liberation Serif", serif; fill: #222; }
.mini { font: bold 9px "Liberation Sans", sans-serif; }
.tiny { font: 9px "Liberation Sans", sans-serif; fill: #111; letter-spacing: 0; }
.az { font: bold 17px "Liberation Serif", serif; fill: #2f5ca8; } .az.red { fill: #a03030; font-style: italic; }
.cur { font: bold 14px "Liberation Serif", serif; } .pct { font: 12px "Open Sans", sans-serif; color: #111; } .zero { font-size: 11px; letter-spacing: -.9px; }
.big { display: flex; flex-direction: column; align-items: center; white-space: nowrap; padding-top: 3px; }
.big svg { margin-bottom: 5px; }
.big > .dd { margin-top: 5px; }
.w48 { width: 48px; } .w78 { width: 78px; } .w68 { width: 68px; } .w56 { width: 56px; } .w46 { width: 46px; } .w45 { width: 45px; } .w54 { width: 54px; } .w66 { width: 66px; }
.clipcol { display: flex; flex-direction: column; gap: 4px; padding-top: 4px; }
.g-sty .body { padding-left: 1px; } .g-cel .body { padding-left: 3px; }
.smalls { width: 90px; padding: 2px 0 0 9px; }
.smalls div { height: 22px; display: flex; align-items: center; gap: 4px; }
.smalls span { padding-bottom: 1px; }
.smalls .dd { margin-left: 1px; }

/* formula bar */
.formula { margin-top: 3px; height: 36px; display: flex; border-top: 1px solid #a5a8ae; border-bottom: 1px solid #8a8d97; }
.namebox { width: 213px; height: 19px; display: flex; border-bottom: 1px solid #9a9ea4; }
.nm { width: 143px; background: #fff; display: flex; align-items: center; font: 12px "Liberation Sans", sans-serif; color: #000; border-left: 1px solid #a5a8ae; }
.nm span { flex: 1; text-align: center; padding-right: 4px; }
.fxbar { flex: 1; display: flex; align-items: center; justify-content: space-between; padding: 0 4px 0 3px; border-left: 1px solid #9a9ea4; border-radius: 9px 0 0 9px; margin-left: -2px; background: #dfe3e8; }
.knob { width: 9px; height: 9px; border-radius: 50%; background: linear-gradient(135deg, #aeb2b6, #f6f7f8); }
.fxbar em { font: italic bold 15px/14px "Liberation Serif", serif; } .fxbar small { font-size: 12px; }
.finput { width: 1051px; background: #fff; border-left: 1px solid #9a9ea4; }

/* worksheet */
.sheet { height: 549px; padding-top: 3px; display: flex; background: #eceef4; }
.grid-area { width: 1260px; height: 546px; overflow: hidden; background: #fff; border-top: 1px solid #9a9ea8; }
.cols { height: 16px; display: grid; grid-template-columns: 23px 73px 64px 54px 64px 64px 44px 64px 64px 47px 64px 64px 48px 64px 64px 62px 64px 64px 49px 64px 64px 28px; background: #dfe3e8; border-bottom: 1px solid #a6abb3; font-size: 11px; line-height: 16px; text-align: center; color: #333; }
.cols span { border-right: 1px solid #a6abb3; } .cols span:last-child { border: 0; }
.corner { display: grid; justify-content: end; align-content: end; padding: 0 4px 3px 0; } .corner i { border: 3.500px solid transparent; border-right-color: #b4b9c0; border-bottom-color: #b4b9c0; }
.cells { display: grid; grid-template-columns: 23px 1209px 28px; height: 529px; overflow: hidden; }
.nums, .cal { display: grid; grid-template-rows: 14px 29px 14px 16px repeat(7, 14px) 14px 16px 27px 82px repeat(4, 14px) 16px 41px repeat(4, 14px) 48px 3px; }
.nums { background: #dfe3e8; font-size: 11px; line-height: 13px; border-right: 1px solid #a6abb3; }
.nums span { border-bottom: 1px solid #a6abb3; display: flex; align-items: flex-end; justify-content: center; padding-right: 1px; color: #333; }
.nums span:last-child { border: 0; }
.cal { grid-template-columns: 191px 172px 175px 176px 190px 177px 128px; font: 11px/14px "Liberation Sans", sans-serif; letter-spacing: -.08px; color: #000; text-align: center; }
.month { grid-area: 2 / 1 / 3 / 8; background: #7030a0; color: #fff; font-size: 23px; line-height: 30px; border: 1px solid #000; border-width: 0 2px 1px 0; box-shadow: 0 -2px #000; padding-left: 3px; }
.dow { grid-row: 3; background: #c966ff; font-weight: bold; line-height: 13px; letter-spacing: -.2px; border: solid #000; border-width: 0 1px 1px 0; padding-left: 1px; }
.d, .b { border: solid #000; border-width: 0 1px 1px 0; }
.d { line-height: 13px; letter-spacing: 0; padding-left: 1px; }
.w1 { grid-row: 4; line-height: 15px; } .w2 { grid-row: 11; } .w3 { grid-row: 18; } .w4 { grid-row: 25; }
.dow:nth-child(8), .d:nth-child(15), .d:nth-child(29), .d:nth-child(43), .d:nth-child(57), .b.c7 { border-right-width: 2px; }
.b1 { grid-row: 5 / 11; } .b2 { grid-row: 12 / 18; } .b3 { grid-row: 19 / 25; } .b4 { grid-row: 26 / 28; border-bottom: 0; }
.c1 { grid-column: 1; } .c2 { grid-column: 2; } .c3 { grid-column: 3; } .c4 { grid-column: 4; } .c5 { grid-column: 5; } .c6 { grid-column: 6; } .c7 { grid-column: 7; }
.ev { margin-right: 1px; display: grid; align-content: center; white-space: nowrap; overflow: hidden; }
.ev.r152-153, .ev.r159-160 { align-content: start; }
.ev.up { margin-top: -1px; } .ev.last { margin-right: 2px; align-content: start; padding-top: 9px; }
.ev.left { text-align: left; padding: 18px 0 0 2px; align-content: start; }
.green { background: #92d050; } .gold { background: #d09e00; } .cyan { background: #00b0f0; } .magenta { background: #cc00ff; } .ev.blue { background: #5b9bd5; }
.r145-146 { grid-row: 5 / 7; } .r152-153 { grid-row: 12 / 14; } .r154 { grid-row: 14; } .r155 { grid-row: 15; } .r159 { grid-row: 19; } .r159-160 { grid-row: 19 / 21; } .r161 { grid-row: 21; } .r166 { grid-row: 26; } .r166-167 { grid-row: 26 / 28; }
.vscroll { width: 17px; background: #dde1ea; border-right: 1px solid #8e93a0; display: flex; flex-direction: column; align-items: center; }
.split { width: 15px; height: 8px; background: #fff; border: 2px solid #8e93a0; }
.up-arrow { margin-top: 6px; border: solid transparent; border-width: 0 4.500px 5px; border-bottom-color: #444; }
.vthumb { margin-top: 139px; width: 15px; height: 34px; border: 1px solid #8e93a0; border-radius: 2px; background: linear-gradient(90deg, #f6f7f9, #dcdfe6); display: grid; place-items: center; }
.vthumb i { width: 8px; height: 7px; background: repeating-linear-gradient(#777 0 1px, transparent 1px 2px); }
.down-arrow { margin-top: auto; margin-bottom: 6px; border: solid transparent; border-width: 5px 4.500px 0; border-top-color: #444; }

/* sheet tabs */
.sheettabs { height: 16px; display: flex; background: #dfe3e8; border-top: 1px solid #a6abb3; font-size: 12px; line-height: 16px; letter-spacing: -.22px; color: #4a4e55; }
.st { text-align: center; height: 15px; white-space: nowrap; overflow: hidden; background: linear-gradient(#e9ecef, #dfe2e7); }
.act { width: 60px; padding-left: 3px; font-weight: bold; background: #fff; color: #44474c; letter-spacing: -.4px; }
.t2 { width: 118px; padding-right: 7px; } .t3 { width: 87px; padding-right: 4px; } .t4 { width: 61px; padding-right: 5px; } .t5 { width: 53px; padding-right: 2px; } .t6 { width: 107px; padding-right: 3px; } .t7 { width: 56px; padding-right: 3px; } .t8 { width: 60px; text-align: left; padding-left: 4px; letter-spacing: -.45px; }
.slash { width: 13px; height: 15px; background: linear-gradient(135deg, #e9ecef 49%, #8e939b 50%, #8e939b 54%, #e9ecef 55%); }
.act + .slash { background: linear-gradient(135deg, #fff 47%, #8e939b 48%, #8e939b 54%, #e9ecef 55%); }
.hscroll { flex: 1; display: flex; align-items: center; background: #dde1ea; }
.hsplit { width: 8px; height: 15px; background: #fff; border: 2px solid #8e93a0; }
.larr { margin-left: 5px; border: solid transparent; border-width: 4.500px 5px 4.500px 0; border-right-color: #333; }
.hthumb { margin-left: 7px; width: 169px; height: 15px; border: 1px solid #8e93a0; border-radius: 2px; background: linear-gradient(#f8f9fa, #dcdfe6); display: grid; place-items: center; }
.hthumb i { width: 7px; height: 7px; background: repeating-linear-gradient(90deg, #777 0 1px, transparent 1px 2px); }
.rarr { margin-left: 291px; border: solid transparent; border-width: 4.500px 0 4.500px 5px; border-left-color: #333; } .rarr + .hsplit { margin-left: 6px; }

/* status bar */
.status { height: 22px; display: flex; align-items: center; border-top: 1px solid #8d9299; background: linear-gradient(#dadde1, #c9ccd1 60%, #babdc3); }
.listo { margin-left: 8px; width: 33px; padding-bottom: 1px; } .ssep { width: 1px; height: 17px; background: #7f848b; } .s2 { margin-right: 4px; }
.zoom { width: 37px; text-align: center; letter-spacing: -.1px; padding-bottom: 1px; }

/* taskbar */
.taskbar { height: 40px; display: flex; align-items: center; border-top: 1px solid #8b7b70; color: #fff;
  background: radial-gradient(ellipse 90px 40px at 970px 20px, #70482f, #70482f00), radial-gradient(ellipse 70px 30px at 1180px 25px, #6f5240, #6f524000), linear-gradient(105deg, #24130b00 650px, #3a241780 665px, #24130b00 720px, #3a241780 800px, #24130b00 850px), linear-gradient(90deg, #291810, #34221a 300px, #2c1a10 640px, #2b180e 820px, #46301f 1000px, #35241a 1280px); }
.orb { margin-left: 7px; }
.wmp { margin-left: 28px; }
.task { height: 39px; width: 58px; display: grid; place-items: center; border: 1px solid #9b8e86; border-radius: 3px; background: linear-gradient(135deg, #958981, #5d4f46 48%, #46382f 50%, #50423a); margin-right: 4px; }
.stack { width: 54px; margin-right: 9px; box-shadow: 2px 0 #382a22, 3px 0 #8a7d75; }
.ie { margin: 0 8px 0 19px; }
.outl { margin: 0 18px 0 10px; }
.lit { background: linear-gradient(135deg, #e5dfdc, #a99d96 48%, #8d8079 50%, #aaa099); border-color: #ede7e3; }
.off { font: bold 19px "Liberation Serif", serif; } .wblue { fill: #174ea6; font-size: 20px; } .white { fill: #fff; font: bold 20px "Liberation Sans", sans-serif; } .orange { fill: #dc4b16; font: bold 22px "Liberation Sans", sans-serif; }
.lang { margin: 0 13px 6px 0; font-size: 11.500px; }
.clock { width: 80px; display: flex; flex-direction: column; align-items: center; line-height: 17px; font-size: 12px; letter-spacing: -.35px; }
.desk { width: 13px; height: 38px; margin-left: 2px; border: 1px solid #8f837a; background: linear-gradient(135deg, #7f7269, #2a1b12 60%); }
```
